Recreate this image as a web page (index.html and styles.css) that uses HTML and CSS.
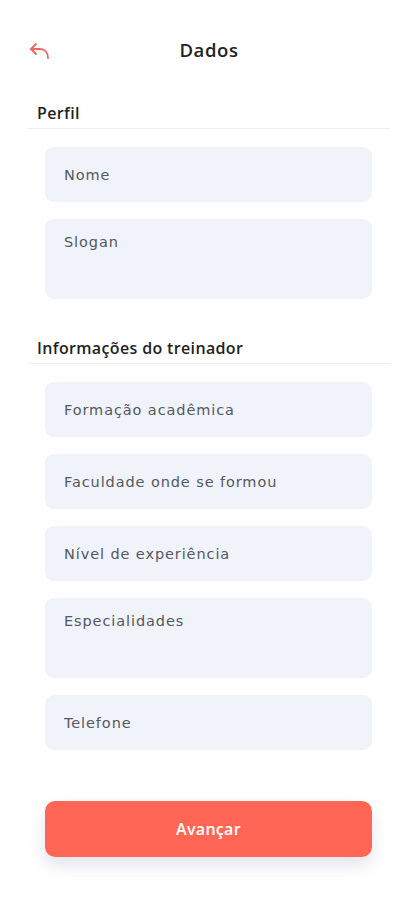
FILE: index.html
```html
<!DOCTYPE html>
<html lang="pt-BR">
<head>
    <meta charset="UTF-8">
    <meta name="viewport" content="width=device-width, initial-scale=1.0">
    <title>Dados</title>
    <link rel="stylesheet" href="styles.css">
</head>
<body>
    <div class="page">
        <header class="topbar">
            <button class="back-btn" aria-label="Voltar">
                <svg width="24" height="24" viewBox="0 0 24 24" fill="none" stroke="#f2675a" stroke-width="1.8" stroke-linecap="round" stroke-linejoin="round">
                    <path d="M8 4 L3 9 L8 14"/>
                    <path d="M3 9 H12 C16.5 9 20 12 20 18"/>
                </svg>
            </button>
            <h1 class="title">Dados</h1>
            <span></span>
        </header>

        <section class="section section-first">
            <h2 class="section-title">Perfil</h2>
            <div class="fields">
                <input class="field" type="text" placeholder="Nome">
                <textarea class="field field-tall" placeholder="Slogan"></textarea>
            </div>
        </section>

        <section class="section">
            <h2 class="section-title">Informações do treinador</h2>
            <div class="fields">
                <input class="field" type="text" placeholder="Formação acadêmica">
                <input class="field" type="text" placeholder="Faculdade onde se formou">
                <input class="field" type="text" placeholder="Nível de experiência">
                <textarea class="field field-tall" placeholder="Especialidades"></textarea>
                <input class="field" type="tel" placeholder="Telefone">
            </div>
        </section>

        <div class="actions">
            <button class="primary-btn">Avançar</button>
        </div>
    </div>
</body>
</html>
```

FILE: styles.css
```css
body {
    margin: 0;
    background: #fff;
    font-family: 'Open Sans', 'Noto Sans', sans-serif;
    color: #222;
}
.page {
    padding: 36px 27px 40px 28px;
}
.topbar {
    display: grid;
    grid-template-columns: 1fr auto 1fr;
    align-items: center;
    height: 24px;
}
.back-btn {
    background: none;
    border: none;
    padding: 0;
    width: 24px;
    height: 24px;
    margin-top: 4px;
    cursor: pointer;
}
.title {
    margin: 0;
    font-size: 18.5px;
    font-weight: 600;
    letter-spacing: 0.6px;
    line-height: 24px;
    color: #222;
}
.section {
    margin-top: 39px;
}
.section-first {
    margin-top: 43px;
}
.section-title {
    margin: 0;
    padding: 0 0 5px 9px;
    font-size: 16px;
    font-weight: 600;
    letter-spacing: 0.35px;
    line-height: 20px;
    color: #1f1f1f;
    border-bottom: 1px solid #eeeff2;
}
.fields {
    display: flex;
    flex-direction: column;
    gap: 17px;
    padding: 18px 18px 0 17px;
}
.field {
    display: block;
    box-sizing: border-box;
    width: 100%;
    height: 55px;
    padding: 0 19px;
    border: none;
    border-radius: 9px;
    background: #f0f3f9;
    font-family: 'DejaVu Sans', sans-serif;
    font-size: 14.5px;
    letter-spacing: 0.9px;
    color: #333;
    outline: none;
    resize: none;
}
.field::placeholder {
    color: #55585e;
}
.field-tall {
    height: 80px;
    padding-top: 13px;
    line-height: 20px;
}
.actions {
    padding: 51px 18px 0 17px;
}
.primary-btn {
    display: block;
    width: 100%;
    height: 56px;
    border: none;
    border-radius: 10px;
    background: #ff6656;
    color: #fff;
    font-family: inherit;
    font-size: 16px;
    font-weight: 600;
    letter-spacing: 0.3px;
    box-shadow: 0 8px 16px rgba(190, 195, 215, 0.45);
    cursor: pointer;
}
```
